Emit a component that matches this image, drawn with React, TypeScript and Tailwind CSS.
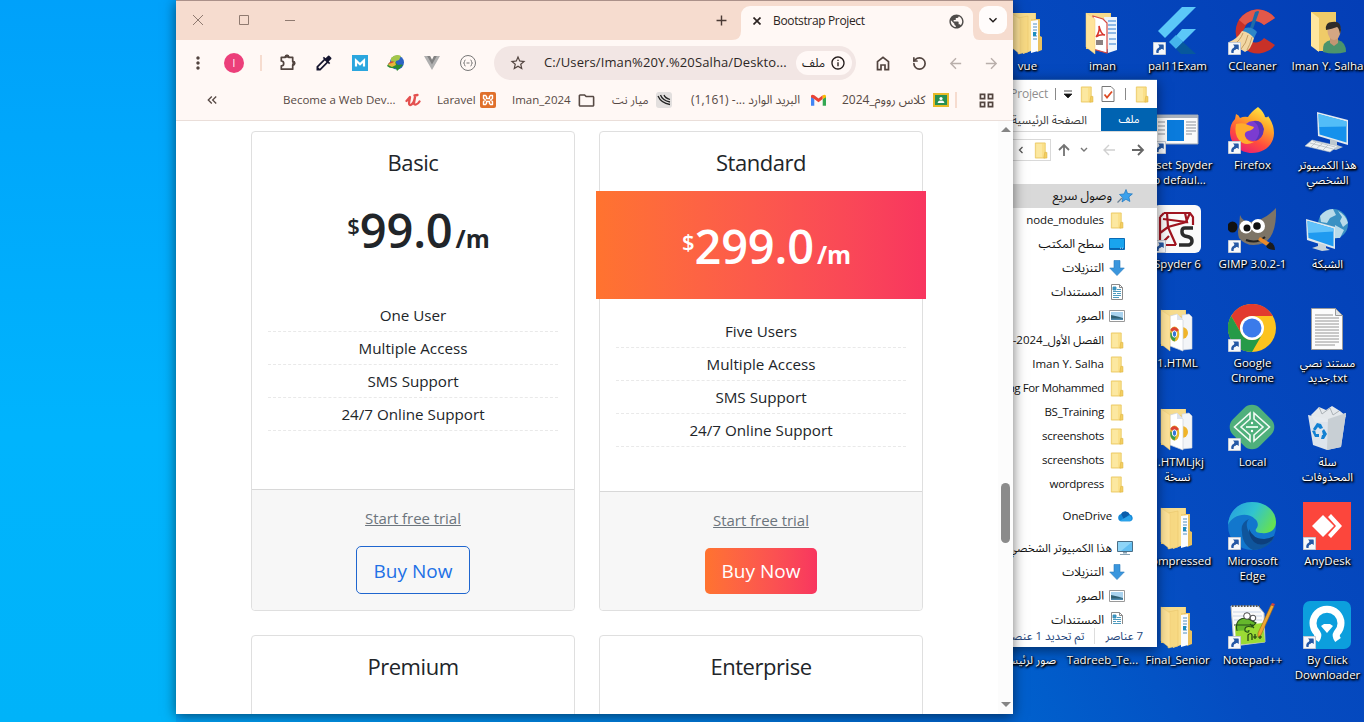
import React from "react";
import {
  MdColorize, MdStarBorder, MdOutlineInfo, MdArrowBack, MdArrowForward,
  MdMoreVert, MdPublic, MdOutlineFolder, MdAdd, MdExpandMore, MdKeyboardDoubleArrowLeft,
} from "react-icons/md";
import { RotateCcw } from "lucide-react";

/* ---------- small explorer / shared icons ---------- */

const MiniFolder = () => (
  <svg viewBox="0 0 16 18" className="h-[17px] w-4 shrink-0">
    <path d="M2 1h10.5v16H2z" fill="#fbe08a" stroke="#e9c65b" strokeWidth=".8" />
    <path d="M3 2h6v14H3z" fill="#fdeaa6" opacity=".8" />
    <path d="M12 11h2.3v6H11z" fill="#f4cf62" stroke="#dfb540" strokeWidth=".6" />
  </svg>
);
const DesktopMini = () => (
  <svg viewBox="0 0 16 16" className="size-4 shrink-0">
    <path d="M.5 2.5h15v11H.5z" fill="#19a4ee" stroke="#0a6ab5" />
    <path d="M1 12h14v1H1z" fill="#0b62ac" />
    <path d="M11 12.2h1m1 0h1" stroke="#fff" strokeWidth=".7" />
  </svg>
);
const DownMini = () => (
  <svg viewBox="0 0 16 16" className="size-4 shrink-0">
    <path d="M5 .5h6V8h4.3L8 15.6.7 8H5z" fill="#3a96dd" stroke="#2779bd" strokeWidth=".6" />
  </svg>
);
const DocMini = () => (
  <svg viewBox="0 0 16 16" className="size-4 shrink-0">
    <path d="M2.5.5h8l3 3v12h-11z" fill="#fff" stroke="#8a8a8a" />
    <path d="M10.500.5v3h3" fill="none" stroke="#8a8a8a" />
    <path d="M4 3h3v3H4zM8 5.500h4M4 7.500h8M4 9.500h3m1 0h4M4 11.500h8M4 13.500h6" fill="#3a96c8" stroke="#3a8fb5" strokeWidth=".9" />
  </svg>
);
const PicMini = () => (
  <svg viewBox="0 0 16 16" className="size-4 shrink-0">
    <path d="M.5 2.500h15v11H.5z" fill="#fff" stroke="#9a9a9a" />
    <path d="M2 4h12v8H2z" fill="#a9d3ef" />
    <path d="M2 7q5 1 12 3v2H2z" fill="#2f6073" />
    <path d="M2 10.500h12V12H2z" fill="#4e88ad" />
  </svg>
);
const PinStar = () => (
  <svg viewBox="0 0 16 16" className="size-4 shrink-0">
    <path d="M9 1.500l1.600 4 4.800.4-3.500 3 1 4.600-4-2.200L5 14l.9-4.200L2.500 6.500l4.600-.6z" fill="#3ba1ec" stroke="#1874c0" strokeWidth=".7" />
    <path d="M.5 14.500L5 10" stroke="#6a7f92" strokeWidth="1.200" />
  </svg>
);
const CloudMini = () => (
  <svg viewBox="0 0 18 16" className="h-4 w-[17px] shrink-0">
    <path d="M4 13.500a4 4 0 0 1 .4-7.700A5 5 0 0 1 13.500 6.500a3.600 3.600 0 0 1 .6 7z" fill="#1488d8" />
    <path d="M4.400 5.800A5 5 0 0 1 13.500 6.500L7 11z" fill="#0a5dab" />
    <path d="M3 13l10-5.500a3.500 3.500 0 0 1 1 6H4z" fill="#2aa3ea" />
  </svg>
);
const PcMini = () => (
  <svg viewBox="0 0 16 16" className="size-4 shrink-0">
    <path d="M.5 1.500h15v10H.5z" fill="#63bff2" stroke="#4b6e86" />
    <path d="M1 2h14L4 11H1z" fill="#8ed5f8" />
    <path d="M6 12h4v1.500H6zM3 14h10v1H3z" fill="#87a1b3" />
  </svg>
);

/* ---------- desktop icons (48 x 48) ---------- */

const Shortcut = () => (
  <svg viewBox="0 0 13 13" className="absolute bottom-0 left-0 size-[13px]">
    <path d="M.5.5h12v12H.5z" fill="#f6f8fb" stroke="#c3cad6" />
    <path d="M3.500 11c-.8-3 .6-5 3-5.300V3.200h4v4.500L9.300 6.800C7 7 5.300 8.500 5.600 11z" fill="#2558a5" />
    <path d="M5 2.500h5.500V8L8.800 6.300 7 8 5.200 6.300 6.800 4.500z" fill="#2558a5" />
  </svg>
);

const FolderBack = () => (
  <>
    <path d="M8 6h25v36H8z" fill="#f1cf72" />
    <path d="M8 6h24v6H8z" fill="#f7dc8d" />
  </>
);
const FolderFront = () => <path d="M8 6l9 6v35l-9-7z" fill="#ffe49a" stroke="#f2cf77" strokeWidth=".5" />;

const FolderFiles = () => (
  <svg viewBox="0 0 48 48" className="size-12">
    <FolderBack />
    <path d="M31 12h6v17l2 1v13l-5 2z" fill="#eac25f" />
    <path d="M20 11l8-1v34l-8 3z" fill="#f9dd8b" />
    <path d="M28 14l7-1v31l-7 2z" fill="#fafcff" />
    <path d="M30 17h4M30 20h4M30 23h4M30 26h4M30 29h4M30 32h4" stroke="#8bb4d5" strokeWidth="1.500" />
    <path d="M30 25h3v4h-3z" fill="#1b8dbd" />
    <path d="M15 11l10-2v36l-10 2z" fill="#f7d983" stroke="#e7c267" strokeWidth=".5" />
    <FolderFront />
  </svg>
);
const FolderPdf = () => (
  <svg viewBox="0 0 48 48" className="size-12">
    <FolderBack />
    <path d="M26 10h13v33l-9 3z" fill="#eef5fc" />
    <path d="M30 14h8M30 18h8M30 22h8M30 26h8M31 32h7M31 37h7" stroke="#8fb9e6" strokeWidth="2" />
    <path d="M15 9l10 3 4 4v30l-14-4z" fill="#fff" stroke="#d54a43" strokeWidth="1.200" />
    <path d="M18 30q4-5 3-11 2 9 6 9-5-1-9 2" fill="none" stroke="#d8352c" strokeWidth="1.500" />
    <path d="M18 33h7v5h-7z" fill="#5b4b4b" opacity=".7" />
    <FolderFront />
  </svg>
);
const FolderHtml = () => (
  <svg viewBox="0 0 48 48" className="size-12">
    <FolderBack />
    <path d="M29 11l7-1 3 3v32l-10 1z" fill="#f3f5f8" stroke="#cfd4dc" strokeWidth=".6" />
    <path d="M29 23a6 6 0 0 1 0 12z" fill="#f0b428" />
    <path d="M17 12l7-2 6 6v31l-13-5z" fill="#fff" stroke="#ccd1da" strokeWidth=".7" />
    <path d="M24 10v6h6z" fill="#dde2ea" />
    <ellipse cx="21.500" cy="30" rx="4.800" ry="7.500" fill="#e8b92d" />
    <path d="M17 26q4-6 9 0l-4 3z" fill="#dc4332" />
    <path d="M16.800 28q0 8 4.700 9.500l1.500-5z" fill="#3a9c4b" />
    <ellipse cx="21.500" cy="30" rx="2.200" ry="3.200" fill="#3475d8" stroke="#fff" />
    <FolderFront />
  </svg>
);
const Flutter = () => (
  <svg viewBox="0 0 48 48" className="size-12">
    <path d="M29 0h14L12 31l-7-7z" fill="#5cc8f8" />
    <path d="M29 22h14L30 35l-7-6z" fill="#5cc8f8" />
    <path d="M16 35l7-7 7 7-7 7z" fill="#45b5ec" />
    <path d="M23 42l7-7 13 12H28z" fill="#07589c" />
  </svg>
);
const CCleaner = () => (
  <svg viewBox="0 0 48 48" className="size-12">
    <path d="M47 11A22 22 0 1 0 47 38l-11-7a11 11 0 1 1 0-13z" fill="#c83128" />
    <path d="M47 11A22 22 0 0 0 11 13l6 5q9-8 19 0z" fill="#e2584a" />
    <path d="M27 5q4-2 4 0l-6 17-3-1z" fill="#1d6ba8" />
    <path d="M17 21q7-2 12 4l-3 6q-7-2-12-6z" fill="#2d86c8" />
    <path d="M14 24q7 1 12 7-3 12-9 14L1 35q8-3 13-11z" fill="#f2d7a3" />
    <path d="M15 26q-3 8-9 11m14-9q-2 9-7 14m11-12q-2 8-5 13" fill="none" stroke="#c59e64" />
  </svg>
);
const UserFolder = () => (
  <svg viewBox="0 0 48 48" className="size-12">
    <path d="M8 5h25v39H14z" fill="#efcb68" />
    <path d="M8 5l8 6v34l-8-6z" fill="#ffe69e" />
    <path d="M20 45q-1-11 8-12h7q8 2 8 12-12 3-23 0z" fill="#4c946c" />
    <path d="M27 31h8v5l-4 3-4-3z" fill="#c39673" />
    <ellipse cx="31" cy="24" rx="6.500" ry="9" fill="#d4a783" />
    <path d="M23 23q-1-8 6-8 9-2 9 8l-1 4q-1-6-3-7-5 2-11 3z" fill="#2f2c2a" />
  </svg>
);
const Wizard = () => (
  <svg viewBox="0 0 48 48" className="size-12">
    <path d="M3 9h42v29H3z" fill="#fafafa" stroke="#9aa4b3" />
    <path d="M3 9h42v3H3z" fill="#a9b1bc" />
    <path d="M14 14h17v21H14z" fill="#0a7bdc" />
    <path d="M5 16h7M5 20h7M5 24h7M5 28h7M33 16h10M33 19h10M33 22h10M33 25h10M33 28h6" stroke="#8c929b" />
  </svg>
);
const Firefox = () => (
  <svg viewBox="0 0 48 48" className="size-12">
    <defs>
      <linearGradient id="ffx" x1=".8" y1="0" x2=".3" y2="1">
        <stop offset="0" stopColor="#fff04a" /><stop offset=".35" stopColor="#ffa628" />
        <stop offset=".7" stopColor="#ff4b3f" /><stop offset="1" stopColor="#e81f74" />
      </linearGradient>
    </defs>
    <path d="M30 1q6 5 7 10 3 1 3-1 6 8 6 17c0 12-10 20-22 20S2 38 2 26q0-8 5-13l1-5q3 1 4 4 4-2 8-1 3-5 10-10z" fill="url(#ffx)" />
    <circle cx="25" cy="25" r="10" fill="#7b3bd1" />
    <path d="M25 15q9-2 11 8-1 10-9 12 5-6 4-11-1-6-6-9z" fill="#5a35b8" />
    <path d="M8 18q8-2 12 1l6 2q-1 3-6 4-4 1-3 5 2 6 9 6-9 5-15-2-5-6-3-16z" fill="#ffac2c" />
  </svg>
);
const ThisPc = () => (
  <svg viewBox="0 0 48 48" className="size-12">
    <path d="M14 6l31 8v25l-30-9z" fill="#e5ebef" />
    <path d="M15.500 8l28 7.500v21l-27-8z" fill="#1591ec" />
    <path d="M15.500 8l28 7.500v5L16 21z" fill="#52bdf8" />
    <path d="M27 33l7 2v4l6 2-7 3-11-3 5-3z" fill="#bdc8cf" />
    <path d="M9 34l26 6-8 6-25-6z" fill="#eef1f3" stroke="#b5bdc3" strokeWidth=".6" />
    <path d="M7 37l23 6m-20-8l22 6M13 36l-5 5m11-3l-5 4m11-3l-5 5" stroke="#aeb6bb" strokeWidth=".7" />
  </svg>
);
const Network = () => (
  <svg viewBox="0 0 48 48" className="size-12">
    <circle cx="30" cy="19" r="15" fill="#3a91c3" />
    <path d="M17 11q6-7 13-7l3 6-6 3-3 5-6-1zM35 6q8 4 10 12l-5 4-3-6 2-4zM32 20l9 5-4 8h-6z" fill="#cfe8f1" opacity=".85" />
    <path d="M3 14l29 8v22L4 35z" fill="#dfe8ed" />
    <path d="M4.500 16l26 7.500v18L5.500 33z" fill="#1f9af0" />
    <path d="M4.500 16l26 7.500v3L5 28z" fill="#62c2fa" />
    <path d="M15 38l8 2v3l4 2-8 1-10-3 6-2z" fill="#c9d4da" />
  </svg>
);
const Spyder = () => (
  <svg viewBox="0 0 48 48" className="size-12">
    <rect width="48" height="48" rx="6" fill="#fafafa" />
    <path d="M11 8h26l3 4v8M7 12v28h16M7 12l4-4M14 8l1 14M7 28l8-6 18-5 4-9M15 22l8 18M10 14l24 3-2-9M7 40l9-9" fill="none" stroke="#a01420" strokeWidth="2.200" />
    <path d="M40 23H32q-3 0-3 3v1q0 3 3 4l4 1q3 1 3 4t-3 4H26" fill="none" stroke="#2c2c2c" strokeWidth="3.500" />
  </svg>
);
const Gimp = () => (
  <svg viewBox="0 0 48 48" className="size-12">
    <path d="M12 10q2 6 10 7 15-2 26-14 1 28-12 35-16 6-25-5-2-7 0-11z" fill="#7d7466" />
    <ellipse cx="4.500" cy="22" rx="5" ry="5.500" fill="#111" />
    <circle cx="18" cy="22" r="6.500" fill="#fff" /><circle cx="30" cy="21" r="7" fill="#fff" />
    <circle cx="19" cy="23" r="3.500" fill="#111" /><circle cx="29" cy="21" r="3.800" fill="#111" />
    <path d="M18 35q11 4 19-3" fill="none" stroke="#222" strokeWidth="2" />
    <path d="M32 32l10 6-2 4-10-7z" fill="#e98a2c" />
    <path d="M42 37q5 2 5 8-7 0-9-4z" fill="#1b1b1b" />
  </svg>
);
const Chrome = () => (
  <svg viewBox="0 0 48 48" className="size-12">
    <circle cx="24" cy="24" r="24" fill="#fcc31e" />
    <path d="M3.200 12A24 24 0 0 1 44.800 12H24a12 12 0 0 0-10.400 18z" fill="#e23b2e" />
    <path d="M3.200 12A24 24 0 0 0 24 48l10.400-18a12 12 0 0 1-20.800 0z" fill="#269a48" />
    <circle cx="24" cy="24" r="12" fill="#fff" /><circle cx="24" cy="24" r="9.500" fill="#3a7bea" />
  </svg>
);
const TextDoc = () => (
  <svg viewBox="0 0 48 48" className="size-12">
    <path d="M8.500 4.500h24l7 7v34h-31z" fill="#fcfcfc" stroke="#9b9b9b" />
    <path d="M32.500 4.500v7h7z" fill="#e0e4e8" stroke="#9b9b9b" />
    <path d="M12 11h18M12 14h24M12 17h24M12 20h24M12 23h24M12 26h24M12 29h24M12 32h24M12 35h24M12 38h24M12 41h20" stroke="#8b8b8b" strokeWidth=".9" />
  </svg>
);
const LocalApp = () => (
  <svg viewBox="0 0 48 48" className="size-12">
    <rect x="5" y="5" width="38" height="38" rx="11" transform="rotate(45 24 24)" fill="#4fb07c" />
    <path d="M22 10L6.500 24 22 38v-6L13 24l9-8zM26 10l15.500 14L26 38v-6l9-8-9-8z" fill="none" stroke="#f3fbf5" strokeWidth="1.600" />
    <path d="M18 24h12" stroke="#eafff1" strokeWidth="1.800" />
    <circle cx="24" cy="20" r="1.200" fill="#fff" /><circle cx="24" cy="28" r="1.200" fill="#fff" />
  </svg>
);
const Bin = () => (
  <svg viewBox="0 0 48 48" className="size-12">
    <path d="M8 12l8-8 7 3 6-4 8 5 6 5-5 6H12z" fill="#e4e8eb" />
    <path d="M16 4l3 7 8-6 3 7 6-4" fill="none" stroke="#abb2b7" />
    <path d="M5 12l20 4 18-6-5 34-14 3-14-5z" fill="#e6eaed" opacity=".96" />
    <path d="M25 16l18-6-5 34-14 3z" fill="#c8cfd4" />
    <path d="M10 26l4-6 4 1 2 4-3 1-2-2-3 4zM9 28l3 6h4v-3h-3l-1-4zM21 26l3 5-3 5h-3l1-4h1l-1-4z" fill="#1381d2" />
  </svg>
);
const Edge = () => (
  <svg viewBox="0 0 48 48" className="size-12">
    <defs>
      <linearGradient id="eg" x1="0" y1=".2" x2="1" y2=".6">
        <stop offset="0" stopColor="#279fe0" /><stop offset=".5" stopColor="#31c4cf" /><stop offset="1" stopColor="#65e052" />
      </linearGradient>
    </defs>
    <circle cx="24" cy="24" r="24" fill="#1277cd" />
    <path d="M0 23C1 9 11 0 24 0c14 0 24 9 24 20 0 9-8 12-14 11-6 0-7-2-6-4 3-3 2-8-1-10C19 9 4 13 0 23z" fill="url(#eg)" />
    <path d="M14 30q-2-9 7-13c-3 3-3 8 0 13 5 8 16 9 26 4-4 9-12 14-22 14-7-3-11-10-11-18z" fill="#0f559c" />
    <path d="M46 34q-5 3-10 3-11 0-15-10 0 8 5 13 8 6 18-2z" fill="#0d3f7c" />
  </svg>
);
const AnyDesk = () => (
  <svg viewBox="0 0 48 48" className="size-12">
    <path d="M0 0h48v48H0z" fill="#fc463c" />
    <path d="M9 24l11-11 11 11-11 11z" fill="#fff" />
    <path d="M25 15l3-3 11 12-11 12-3-3 8-9z" fill="#fff" />
  </svg>
);
const Notepad = () => (
  <svg viewBox="0 0 48 48" className="size-12">
    <path d="M3 5h27l6 7 1 29-31 4z" fill="#fafafa" stroke="#bcc2c2" />
    <path d="M5 11h28M5 15h29M6 19h28" stroke="#cad5e6" />
    <path d="M7 25l28-3 2 19-29 3z" fill="#9bdb35" />
    <path d="M4 5h28" stroke="#555" strokeWidth="2" strokeDasharray="1.500 1.500" />
    <path d="M9 30q-3-13 10-13l9 5-4 4q-8-2-7 4 4 3 4-1M6 24h19M26 27l-4-4" fill="#65b82c" stroke="#244d18" strokeWidth="1.100" />
    <circle cx="19" cy="15" r="3.300" fill="#fff" stroke="#222" strokeWidth=".8" /><circle cx="25" cy="17" r="2.800" fill="#fff" stroke="#222" strokeWidth=".8" />
    <path d="M20 40v-6q3-3 4 0v5m3-6v5m-2-2h4m3-3v5m-2-2h4" fill="none" stroke="#1f3d12" strokeWidth="1.200" />
    <path d="M43 4l3 1-13 29-3 2v-4z" fill="#f0a830" stroke="#9c6418" strokeWidth=".6" />
    <path d="M43 4l1-2 3 1-1 2z" fill="#d6413d" />
  </svg>
);
const ByClick = () => (
  <svg viewBox="0 0 48 48" className="size-12">
    <rect width="48" height="48" rx="7" fill="#0c9fdd" />
    <path d="M13 39q3-4 1-7a14 14 0 1 1 20 0q-2 3 1 7" fill="none" stroke="#fff" strokeWidth="7" />
    <path d="M18 25l3-2h6l3 2-6 7z" fill="#fff" />
  </svg>
);

type DesktopItem = { cell: string; label: string; icon?: React.ReactNode; link?: boolean; rtl?: boolean };
const desktop: DesktopItem[] = [
  { cell: "col-start-1 row-start-1", label: "vue", icon: <FolderFiles /> },
  { cell: "col-start-2 row-start-1", label: "iman", icon: <FolderPdf /> },
  { cell: "col-start-3 row-start-1", label: "pal11Exam", icon: <Flutter />, link: true },
  { cell: "col-start-4 row-start-1", label: "CCleaner", icon: <CCleaner />, link: true },
  { cell: "col-start-5 row-start-1", label: "Iman Y. Salha", icon: <UserFolder /> },
  { cell: "col-start-3 row-start-2", label: "Reset Spyder\nto defaul...", icon: <Wizard />, link: true },
  { cell: "col-start-4 row-start-2", label: "Firefox", icon: <Firefox />, link: true },
  { cell: "col-start-5 row-start-2", label: "هذا الكمبيوتر\nالشخصي", icon: <ThisPc />, rtl: true },
  { cell: "col-start-3 row-start-3", label: "Spyder 6", icon: <Spyder />, link: true },
  { cell: "col-start-4 row-start-3", label: "GIMP 3.0.2-1", icon: <Gimp />, link: true },
  { cell: "col-start-5 row-start-3", label: "الشبكة", icon: <Network />, rtl: true },
  { cell: "col-start-3 row-start-4", label: "1.HTML", icon: <FolderHtml /> },
  { cell: "col-start-4 row-start-4", label: "Google\nChrome", icon: <Chrome />, link: true },
  { cell: "col-start-5 row-start-4", label: "مستند نصي\nجديد.txt", icon: <TextDoc /> },
  { cell: "col-start-3 row-start-5", label: "1.HTMLjkj\nنسخة", icon: <FolderHtml /> },
  { cell: "col-start-4 row-start-5", label: "Local", icon: <LocalApp />, link: true },
  { cell: "col-start-5 row-start-5", label: "سلة\nالمحذوفات", icon: <Bin />, rtl: true },
  { cell: "col-start-3 row-start-6", label: "Compressed", icon: <FolderFiles /> },
  { cell: "col-start-4 row-start-6", label: "Microsoft\nEdge", icon: <Edge />, link: true },
  { cell: "col-start-5 row-start-6", label: "AnyDesk", icon: <AnyDesk />, link: true },
  { cell: "col-start-1 row-start-7", label: "صور لرئيسية", rtl: true },
  { cell: "col-start-2 row-start-7", label: "Tadreeb_Te..." },
  { cell: "col-start-3 row-start-7", label: "Final_Senior", icon: <FolderFiles /> },
  { cell: "col-start-4 row-start-7", label: "Notepad++", icon: <Notepad />, link: true },
  { cell: "col-start-5 row-start-7", label: "By Click\nDownloader", icon: <ByClick />, link: true },
];

function Desktop() {
  return (
    <div className="absolute top-0 left-[989px] grid grid-cols-[repeat(5,75px)] grid-rows-[repeat(7,99px)]">
      {desktop.map((d) => (
        <div key={d.label} className={`flex flex-col items-center pt-[7px] ${d.cell}`}>
          <div className="relative size-12">
            {d.icon}
            {d.link && <Shortcut />}
          </div>
          <div
            dir={d.rtl ? "rtl" : "ltr"}
            className="mt-[3px] pl-[2px] text-center text-[11.5px] leading-[15px] whitespace-pre text-white [text-shadow:1px_1px_2px_#000,1px_1px_2px_#000,0_1px_3px_#000]"
          >
            {d.label}
          </div>
        </div>
      ))}
    </div>
  );
}

/* ---------- file explorer window ---------- */

const ar = "text-[12px]";
const en = "text-[11.5px] tracking-[-0.25px]";

const tree = [
  { t: "node_modules", i: <MiniFolder />, c: "text-[11.5px] tracking-[-0.1px]" },
  { t: "سطح المكتب", i: <DesktopMini />, c: ar },
  { t: "التنزيلات", i: <DownMini />, c: ar },
  { t: "المستندات", i: <DocMini />, c: ar },
  { t: "الصور", i: <PicMini />, c: ar },
  { t: "الفصل الأول_2024-2025", i: <MiniFolder />, c: "text-[11.5px]", rtl: true },
  { t: "Iman Y. Salha", i: <MiniFolder />, c: "text-[11.5px]" },
  { t: "Training For Mohammed", i: <MiniFolder />, c: "text-[11.5px] tracking-[-0.4px]" },
  { t: "BS_Training", i: <MiniFolder />, c: en },
  { t: "screenshots", i: <MiniFolder />, c: en },
  { t: "screenshots", i: <MiniFolder />, c: en },
  { t: "wordpress", i: <MiniFolder />, c: en },
];
const rowClass = "flex h-6 shrink-0 items-center justify-end gap-[5px] whitespace-nowrap text-[#111]";

function Explorer() {
  return (
    <div className="absolute top-[79px] left-[857px] flex h-[568px] w-[300px] flex-col overflow-hidden border-t border-[#2a5fae] bg-white shadow-[0_3px_12px_rgba(0,0,0,.5)]">
      <div className="flex h-7 shrink-0 items-center justify-end pr-[7px]">
        <span className="mr-[7px] text-[12px] tracking-[-0.2px] text-[#8f8f8f]">BS Project</span>
        <span className="h-3 w-px bg-[#888]" />
        <svg viewBox="0 0 8 8" className="mr-[3px] ml-2 size-2"><path d="M0 1h8M0 4l4 4 4-4z" stroke="#222" strokeWidth=".8" fill="#111" /></svg>
        <span className="mr-[6px] ml-[4px]"><MiniFolder /></span>
        <svg viewBox="0 0 14 16" className="h-4 w-[14px]">
          <path d="M1 .5h9l3 3v12H1z" fill="#fff" stroke="#777" />
          <path d="M3.500 8.500L6 11.500l5-6" fill="none" stroke="#dc4b25" strokeWidth="1.800" />
        </svg>
        <span className="mr-2 ml-[10px] h-3 w-px bg-[#888]" />
        <MiniFolder />
      </div>
      <div className="flex h-6 shrink-0 items-stretch justify-end border-b border-[#d9d9d9] text-[11px]">
        <span className="mr-[14px] self-center whitespace-nowrap text-[11.5px] text-[#3b3b3b]">الصفحة الرئيسية</span>
        <span className="flex w-14 items-center justify-center bg-[#0063b1] text-white">ملف</span>
      </div>
      <div className="flex h-[36px] shrink-0 items-center justify-end pr-3 text-[#777]">
        <div className="mr-[7px] flex h-[22px] w-20 items-center justify-end gap-[9px] border border-[#d9d9d9] pr-px">
          <svg viewBox="0 0 6 8" className="h-2 w-[6px]"><path d="M4.500 1L1.500 4l3 3" fill="none" stroke="#555" strokeWidth="1.300" /></svg>
          <MiniFolder />
        </div>
        <svg viewBox="0 0 12 14" className="h-[14px] w-3"><path d="M6 13V2M1 7l5-5 5 5" fill="none" stroke="#737373" strokeWidth="1.800" /></svg>
        <svg viewBox="0 0 8 6" className="mx-[10px] h-[6px] w-2"><path d="M1 1l3 3 3-3" fill="none" stroke="#777" strokeWidth="1.400" /></svg>
        <svg viewBox="0 0 13 12" className="mr-[17px] ml-1 h-3 w-[13px]"><path d="M13 6H2m5-5L2 6l5 5" fill="none" stroke="#d0d0d0" strokeWidth="1.400" /></svg>
        <svg viewBox="0 0 13 12" className="h-3 w-[13px]"><path d="M0 6h11M6 1l5 5-5 5" fill="none" stroke="#666" strokeWidth="1.800" /></svg>
      </div>
      <div className="mt-4 flex h-[440px] shrink-0 flex-col overflow-hidden">
        <div className={`${rowClass} bg-[#d9d9d9] pr-6 text-[12.5px]`}><span>وصول سريع</span><PinStar /></div>
        {tree.map((r, i) => (
          <div key={i} className={`${rowClass} pr-8 ${r.c}`}><span dir={r.rtl ? "rtl" : "ltr"}>{r.t}</span>{r.i}</div>
        ))}
        <div className={`${rowClass} mt-2 pr-[23px] text-[11.5px] tracking-[-0.15px]`}><span>OneDrive</span><CloudMini /></div>
        <div className={`${rowClass} mt-2 pr-6 text-[11.5px]`}><span>هذا الكمبيوتر الشخصي</span><PcMini /></div>
        <div className={`${rowClass} pr-8 text-[12px]`}><span>التنزيلات</span><DownMini /></div>
        <div className={`${rowClass} pr-8 text-[12px]`}><span>الصور</span><PicMini /></div>
        <div className={`${rowClass} pr-8 text-[12px]`}><span>المستندات</span><DocMini /></div>
      </div>
      <div dir="rtl" className="flex h-[23px] items-center pr-[14px] text-[11.5px] whitespace-nowrap text-[#26477c]">
        <span>7 عناصر</span>
        <span className="mx-[10px] h-4 w-px bg-[#ddd]" />
        <span>تم تحديد 1 عنصر</span>
      </div>
    </div>
  );
}

/* ---------- browser window ---------- */

const Slot = ({ children }: { children: React.ReactNode }) => (
  <div className="flex h-9 w-9 shrink-0 items-center justify-center">{children}</div>
);

function TabStrip() {
  return (
    <div className="flex h-10 shrink-0 border-t border-[#ab918a] bg-[#f6dccf] text-[#8f7a70]">
      <svg viewBox="0 0 120 39" className="h-[39px] w-[120px]" fill="none" stroke="#8f7a70">
        <path d="M17 14l10 10M27 14L17 24M63.500 14.500h9v9h-9zM109 19.500h10" />
      </svg>
      <div className="ml-[414px] flex w-[22px] items-center justify-center text-[17px] text-[#4a3a35]"><MdAdd /></div>
      <div className="flex w-[9px] items-end">
        <svg viewBox="0 0 9 9" className="size-[9px]"><path d="M9 0v9H0q9 0 9-9z" fill="#fff8f5" /></svg>
      </div>
      <div className="mt-[5px] flex w-[232px] items-center rounded-t-[9px] bg-[#fff8f5] pr-2 pb-1 pl-[12px] text-[#2c2422]">
        <svg viewBox="0 0 8 8" className="size-2"><path d="M.5.5l7 7M7.500.5l-7 7" stroke="#2c2422" strokeWidth="1.700" /></svg>
        <span className="ml-[12px] flex-1 text-[12px] tracking-[-0.35px]">Bootstrap Project</span>
        <MdPublic className="size-[17px] text-[#4f4c4a]" />
      </div>
      <div className="flex w-[6px] items-end">
        <svg viewBox="0 0 6 9" className="h-[9px] w-[6px]"><path d="M0 0v9h6q-6 0-6-9z" fill="#fff8f5" /></svg>
      </div>
      <div className="mt-[5px] flex size-7 items-center justify-center rounded-[9px] bg-[#fffcfb] text-[#1f1a19]"><MdExpandMore className="size-4" /></div>
    </div>
  );
}

function Toolbar() {
  return (
    <div className="flex h-[46px] shrink-0 items-center px-1 text-[18px] text-[#52443f]">
      <Slot><MdMoreVert className="size-5" /></Slot>
      <Slot><span className="flex size-5 items-center justify-center rounded-full bg-[#ec3f7a] text-[10px] text-white">I</span></Slot>
      <span className="flex w-[18px] justify-center"><span className="h-4 w-[2px] bg-[#f6dccf]" /></span>
      <Slot>
        <svg viewBox="0 0 18 18" className="size-[18px]" fill="none" stroke="#52443f" strokeWidth="1.700">
          <path d="M2.300 3.300h4a1.700 1.700 0 0 1 3.400 0h4v4.200a1.700 1.700 0 0 1 0 3.400v4.300H2.300v-3.400a2.400 2.400 0 0 0 0-4.800z" strokeLinejoin="round" />
          <path d="M6.500 2.800a1.500 1.500 0 0 1 3 0zM14.200 7.700a1.500 1.500 0 0 1 0 3z" fill="#52443f" />
        </svg>
      </Slot>
      <Slot><MdColorize className="size-[20px] text-[#15152e]" /></Slot>
      <Slot>
        <svg viewBox="0 0 16 16" className="size-4"><path d="M0 0h16v16H0z" fill="#2ba6de" /><path d="M4 11.500v-6l4 3.800 4-3.800v6" fill="none" stroke="#fff" strokeWidth="2.200" /></svg>
      </Slot>
      <Slot>
        <svg viewBox="0 0 18 18" className="size-[18px]">
          <circle cx="10" cy="8.500" r="7" fill="#2c63c4" />
          <path d="M4 4q5-5 10-2l-2 4-3 1-1 4-4-1z" fill="#a4c64a" />
          <path d="M0 12q3-6 8-4l3 3q4-1 5 0l-6 6-1-3q-6 1-9-2z" fill="#2a8c33" />
          <path d="M1 11q3-5 7-3l1 3-4 2z" fill="#e7b73a" />
          <path d="M1 10q3-4 6-2l-2 1z" fill="#d9483a" />
        </svg>
      </Slot>
      <Slot>
        <svg viewBox="0 0 16 14" className="h-[14px] w-4"><path d="M0 0h6l2 4 2-4h6L8 14z" fill="#b0b0b0" /><path d="M3.200 0H6l2 4 2-4h2.800L8 8.500z" fill="#828282" /></svg>
      </Slot>
      <Slot>
        <svg viewBox="0 0 16 16" className="size-4" fill="none" stroke="#777">
          <circle cx="8" cy="8" r="7.500" /><path d="M5.500 5Q4.500 5 4.500 6.500T3.500 8q1 0 1 1.500T5.500 11M10.500 5q1 0 1 1.500t1 1.500q-1 0-1 1.500t-1 1.500M6.500 8h3" />
        </svg>
      </Slot>
      <div className="ml-2 flex h-[34px] w-[362px] shrink-0 items-center rounded-full bg-[#f2e6e4] pr-1 pl-[15px]">
        <MdStarBorder className="size-[18px]" />
        <span className="ml-[17px] w-[250px] text-[13px] tracking-[0.12px] whitespace-nowrap text-[#2d2625]">C:/Users/Iman%20Y.%20Salha/Deskto...</span>
        <span className="ml-[2px] flex h-6 w-14 items-center justify-center gap-[5px] rounded-full bg-[#fff8f6] text-[12px] text-[#221a19]">
          ملف <MdOutlineInfo className="size-4" />
        </span>
      </div>
      <div className="ml-[9px] flex">
        <Slot>
          <svg viewBox="0 0 14 15" className="h-[15px] w-[14px]" fill="none" stroke="#52443f" strokeWidth="1.700">
            <path d="M1.500 5.700L7 1.300l5.500 4.400v8H9V9H5v4.700H1.500z" />
          </svg>
        </Slot>
        <Slot><RotateCcw size={15} strokeWidth={2.700} /></Slot>
        <Slot><MdArrowBack className="size-[17px] text-[#b9afab]" /></Slot>
        <Slot><MdArrowForward className="size-[17px] text-[#b9afab]" /></Slot>
      </div>
    </div>
  );
}

function Bookmarks() {
  return (
    <div className="flex h-[35px] shrink-0 items-center border-b border-[#eaded9] pb-[6px] text-[11.5px] whitespace-nowrap text-[#564843]">
      <MdKeyboardDoubleArrowLeft className="ml-7 size-4" />
      <div className="ml-[63px] flex w-[138px] items-center justify-between">
        <span>Become a Web Dev...</span>
        <svg viewBox="0 0 16 16" className="size-4" fill="none" stroke="#e4504f" strokeWidth="2.300" strokeLinecap="round" strokeLinejoin="round"><path d="M1.500 9L5 5l-1 6q0 3 2.500 1.500Q9 11 10 5l-1 6q0 2 2 1.500 2-.5 3.500-3M9.500 3.500l3-.5" /></svg>
      </div>
      <div className="ml-4 flex w-[59px] items-center justify-between">
        <span>Laravel</span>
        <svg viewBox="0 0 16 16" className="size-4"><rect width="16" height="16" rx="2" fill="#e0702b" /><path d="M5.500 3.500h-2v3l2 1.500-2 1.500v3h2l1-1v-2h3v2l1 1h2v-3l-2-1.500 2-1.500v-3h-2l-1 1v2h-3v-2z" fill="none" stroke="#fff" strokeWidth="1.400" strokeLinejoin="round" /></svg>
      </div>
      <div className="ml-4 flex w-[83px] items-center justify-between">
        <span>Iman_2024</span>
        <MdOutlineFolder className="-mr-px size-[19px]" />
      </div>
      <div className="ml-[17px] flex w-[60px] items-center justify-between">
        <span>ميار نت</span>
        <svg viewBox="0 0 16 16" className="size-4"><rect width="16" height="16" rx="3" fill="#e2dfde" /><path d="M2 4q3 7 12 8.500M4.500 3q2 5.500 9.500 7M8 3q1 3 6 4.500" fill="none" stroke="#222" strokeWidth="1.300" /></svg>
      </div>
      <div className="ml-[19px] flex w-[135px] items-center justify-between">
        <span dir="rtl" className="text-[12px]">البريد الوارد ...- (1,161)</span>
        <svg viewBox="0 0 16 12" className="h-3 w-[15px]"><path d="M0 1.500V12h3.500V5z" fill="#4285f4" /><path d="M16 1.500V12h-3.500V5z" fill="#34a853" /><path d="M0 1.500Q1-.5 3.500 1L8 4.500 12.500 1v4L8 8.500 3.500 5 0 3z" fill="#ea4335" /><path d="M12.500 1Q15-.5 16 1.500V3l-3.500 2z" fill="#fbbc04" /></svg>
      </div>
      <div className="ml-4 flex w-[107px] items-center justify-between">
        <span dir="rtl" className="text-[12px]">كلاس رووم_2024</span>
        <svg viewBox="0 0 16 14" className="h-[14px] w-4"><path d="M0 0h16v14H0z" fill="#e7ba28" /><path d="M2 2h12v10H2z" fill="#279052" /><circle cx="8" cy="5.500" r="1.600" fill="#fff" /><path d="M4.500 10q1-3 3.500-2.300Q10.500 7 11.500 10z" fill="#fff" /></svg>
      </div>
      <span className="ml-[6px] h-4 w-[2px] bg-[#f6dccf]" />
      <svg viewBox="0 0 16 16" className="ml-[22px] size-[15px]" fill="none" stroke="#52443f" strokeWidth="1.800"><path d="M1.500 1.500h4.500v4.500H1.500zM10 1.500h4.500v4.500H10zM1.500 10h4.500v4.500H1.500zM10 10h4.500v4.500H10z" /></svg>
    </div>
  );
}

type Plan = { name: string; price?: string; featured?: boolean; users?: string };

function Card({ name, price, featured, users }: Plan) {
  return (
    <div className="flex h-[480px] w-[324px] flex-col rounded border border-[#dfdfdf] bg-white text-[#212529]">
      <h4 className="mt-4 text-center text-[22px] leading-[29px] tracking-[-0.45px]">{name}</h4>
      {price && (
        <>
          <div
            className={
              featured
                ? "-mx-1 mt-[14px] flex h-[108px] shrink-0 items-center justify-center bg-linear-to-r from-[#ff732f] to-[#f8355f] text-white"
                : "mt-[14px] flex h-[76px] shrink-0 items-center justify-center"
            }
          >
            <div className="flex h-[58px] items-baseline pl-[11px] leading-[60px] font-semibold">
              <span className="relative -top-[14px] text-[22px] leading-none">$</span>
              <span className="text-[47px] tracking-[-0.2px]">{price}</span>
              <span className="ml-[3px] text-[24.5px] font-bold">/m</span>
            </div>
          </div>
          <ul className={featured ? "mx-4 pt-4 text-center" : "mx-4 pt-8 text-center"}>
            {[users, "Multiple Access", "SMS Support", "24/7 Online Support"].map((f) => (
              <li key={f} className="h-[33px] border-b border-dashed border-[#e9e9e9] pt-1 text-[15.2px] leading-6">{f}</li>
            ))}
          </ul>
          <div className={`mt-auto flex flex-col items-center rounded-b border-t border-[#d8d8d8] bg-[#f7f7f7] ${featured ? "h-[119px]" : "h-[121px]"}`}>
            <a className="mt-4 text-[15px] leading-6 tracking-[-0.05px] text-[#6c757d] underline">Start free trial</a>
            <button
              className={
                featured
                  ? "mt-4 h-[46px] w-28 rounded-[5px] bg-linear-to-r from-[#ff732f] to-[#f8355f] pt-px text-[19px] text-white"
                  : "mt-4 h-12 w-[114px] rounded-[5px] border border-[#1f66cf] pt-[2px] text-[19px] text-[#2270e6]"
              }
            >
              Buy Now
            </button>
          </div>
        </>
      )}
    </div>
  );
}

function Browser() {
  return (
    <div className="absolute top-0 left-[176px] flex h-[714px] w-[837px] flex-col overflow-hidden bg-[#fff8f5] shadow-[0_2px_12px_rgba(0,0,0,.55)]">
      <TabStrip />
      <Toolbar />
      <Bookmarks />
      <div className="flex h-[593px] min-h-0 overflow-hidden bg-white">
        <div className="grid h-full grid-cols-2 content-start gap-6 pt-[10px] pl-[75px]">
          <Card name="Basic" price="99.0" users="One User" />
          <Card name="Standard" price="299.0" users="Five Users" featured />
          <Card name="Premium" />
          <Card name="Enterprise" />
        </div>
        <div className="ml-auto flex w-[15px] flex-col items-center bg-[#fcfcfc]">
          <svg viewBox="0 0 10 6" className="mt-[5px] h-[6px] w-[10px]"><path d="M0 6l5-5 5 5z" fill="#858585" /></svg>
          <div className="mt-[351px] h-[60px] w-[9px] rounded-full bg-[#8b8b8b]" />
          <svg viewBox="0 0 10 6" className="mt-[159px] h-[6px] w-[10px]"><path d="M0 0l5 5 5-5z" fill="#858585" /></svg>
        </div>
      </div>
    </div>
  );
}

export default function App() {
  return (
    <div className="relative h-[722px] w-[1364px] overflow-hidden bg-linear-to-r from-[#00acfc] from-5% via-[#0060cc] via-74% to-[#0440b9] font-['Open_Sans','Noto_Sans_Arabic','DejaVu_Sans',sans-serif]">
      <div className="absolute inset-y-0 left-0 w-[176px] bg-linear-to-b from-[#00a1fa] via-[#00b4fd] via-60% to-[#00b3f9]" />
      <div className="absolute inset-y-0 right-0 w-[364px] bg-linear-to-tr from-[#0062ce] via-[#054cc1] via-35% to-[#043eb6]" />
      <Desktop />
      <Explorer />
      <Browser />
    </div>
  );
}
